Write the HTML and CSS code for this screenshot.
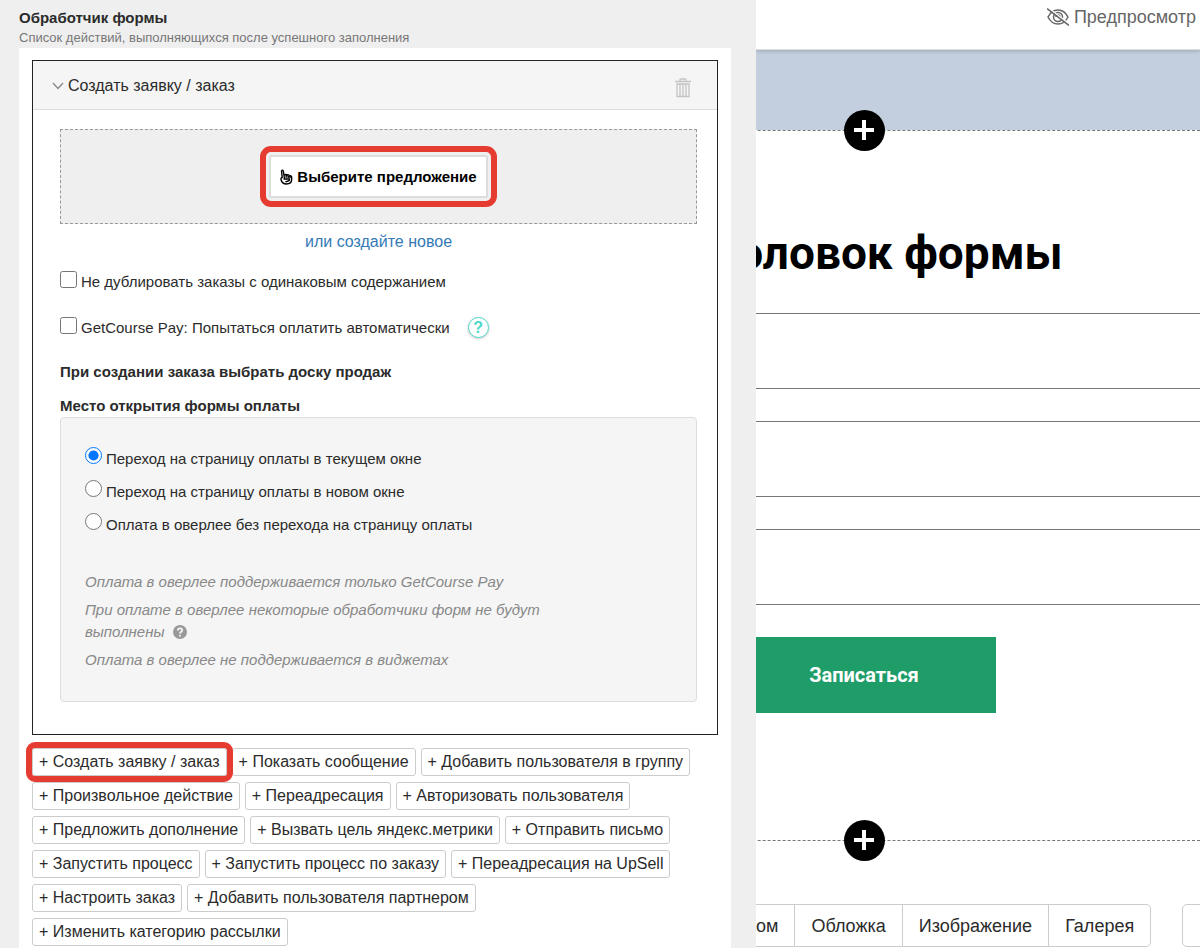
FILE: index.html
```html
<!DOCTYPE html>
<html lang="ru">
<head>
<meta charset="utf-8">
<title>Обработчик формы</title>
<link rel="stylesheet" href="styles.css">
</head>
<body>
<div class="editor">
  <section class="settings">
    <h1 class="settings-title">Обработчик формы</h1>
    <p class="settings-note">Список действий, выполняющихся после успешного заполнения</p>
    <div class="handlers">
      <article class="card">
        <header class="card-head">
          <svg class="chevron" viewBox="0 0 12 8"><path d="M1 1l5 5.500 5-5.500"/></svg>
          <span class="card-name">Создать заявку / заказ</span>
          <button class="icon-button" type="button" aria-label="Удалить">
            <svg class="trash" viewBox="0 0 16 20"><path d="M0 3.500h16M5 3V1.500Q5 1 6 1h4q1 0 1 .5V3M2 6h12v12.500H2zM5 6v12M8 6v12M11 6v12"/></svg>
          </button>
        </header>
        <div class="card-body">
          <div class="offer-drop">
            <button class="offer-button marked" type="button">
              <svg class="hand" viewBox="0 0 13 16"><path d="M4.500 9.500L3.300 2Q2.500.3 1.500 2L2.200 8.500Q.8 8.500 1 10.500 2 15 6.500 15q5 0 5.200-4.500L11.500 7.500Q10.500 6 9.500 7 8.500 5 7.200 6.300 5.800 4.800 4.200 6.300M6.200 6.500v2.300M8.200 7v2M10 7.500V9M3.500 10h6q.3 2-2 2.200-1.500.1-2 1"/></svg>
              <span>Выберите предложение</span>
            </button>
          </div>
          <a class="new-offer" href="#">или создайте новое</a>
          <label class="check"><input type="checkbox"><span>Не дублировать заказы с одинаковым содержанием</span></label>
          <div class="check-row">
            <label class="check"><input type="checkbox"><span>GetCourse Pay: Попытаться оплатить автоматически</span></label>
            <button class="help" type="button">?</button>
          </div>
          <h2 class="field-title">При создании заказа выбрать доску продаж</h2>
          <h2 class="field-title">Место открытия формы оплаты</h2>
          <div class="well">
            <div class="radios">
              <label class="radio"><input type="radio" name="place" checked><span>Переход на страницу оплаты в текущем окне</span></label>
              <label class="radio"><input type="radio" name="place"><span>Переход на страницу оплаты в новом окне</span></label>
              <label class="radio"><input type="radio" name="place"><span>Оплата в оверлее без перехода на страницу оплаты</span></label>
            </div>
            <div class="hints">
              <p>Оплата в оверлее поддерживается только GetCourse Pay</p>
              <p>При оплате в оверлее некоторые обработчики форм не будут выполнены <svg class="hint-help" viewBox="0 0 14 14"><circle cx="7" cy="7" r="7"/><path d="M4.800 5.500q0-2.200 2.200-2.200t2.200 1.900q0 1-1.100 1.700Q7 7.500 7 8.500M7 9.700v1.800"/></svg></p>
              <p>Оплата в оверлее не поддерживается в виджетах</p>
            </div>
          </div>
        </div>
      </article>
      <div class="actions">
        <button class="action marked" type="button">+ Создать заявку / заказ</button>
        <button class="action" type="button">+ Показать сообщение</button>
        <button class="action" type="button">+ Добавить пользователя в группу</button>
        <button class="action" type="button">+ Произвольное действие</button>
        <button class="action" type="button">+ Переадресация</button>
        <button class="action" type="button">+ Авторизовать пользователя</button>
        <button class="action" type="button">+ Предложить дополнение</button>
        <button class="action" type="button">+ Вызвать цель яндекс.метрики</button>
        <button class="action" type="button">+ Отправить письмо</button>
        <button class="action" type="button">+ Запустить процесс</button>
        <button class="action" type="button">+ Запустить процесс по заказу</button>
        <button class="action" type="button">+ Переадресация на UpSell</button>
        <button class="action" type="button">+ Настроить заказ</button>
        <button class="action" type="button">+ Добавить пользователя партнером</button>
        <button class="action" type="button">+ Изменить категорию рассылки</button>
      </div>
    </div>
  </section>

  <main class="preview">
    <header class="topbar">
      <button class="preview-button" type="button">
        <svg class="eye" viewBox="0 0 22 18"><path d="M1 9q3.500-7 10-7t10 7q-3.500 7-10 7T1 9z"/><circle cx="11" cy="9" r="4.500"/><path d="M9 9q0-2 2-2t2 2"/><path class="slash-gap" d="M1.500 0L22 16"/><path d="M0 .5l22 17"/></svg>
        <span>Предпросмотр</span>
      </button>
    </header>
    <div class="canvas">
      <div class="cover"></div>
      <div class="divider">
        <button class="add" type="button" aria-label="Добавить блок"><svg viewBox="0 0 22 22"><path d="M11 1v20M1 11h20"/></svg></button>
      </div>
      <form class="form-block">
        <h2 class="form-title">Заголовок формы</h2>
        <input class="form-field" type="text" aria-label="Имя">
        <input class="form-field" type="text" aria-label="Почта">
        <input class="form-field" type="text" aria-label="Телефон">
        <button class="submit" type="button">Записаться</button>
      </form>
      <div class="divider">
        <button class="add" type="button" aria-label="Добавить блок"><svg viewBox="0 0 22 22"><path d="M11 1v20M1 11h20"/></svg></button>
      </div>
    </div>
    <nav class="block-types">
      <div class="group">
        <button class="type type-cut" type="button">ом</button>
        <button class="type" type="button">Обложка</button>
        <button class="type" type="button">Изображение</button>
        <button class="type" type="button">Галерея</button>
      </div>
      <button class="type type-next" type="button" aria-label="Ещё"></button>
    </nav>
  </main>
</div>
</body>
</html>
```
FILE: styles.css
```css
* { box-sizing: border-box; }

body {
  margin: 0;
  background: #fff;
  color: #2b2b2b;
  font-family: "Liberation Sans", Arial, sans-serif;
  font-size: 16px;
  line-height: 22px;
}

h1, h2, p { margin: 0; }
button, input { font: inherit; color: inherit; margin: 0; }
button { cursor: pointer; white-space: nowrap; }
svg { display: block; fill: none; stroke: currentColor; }

.editor {
  display: grid;
  grid-template-columns: 63% minmax(0, 1fr);
  min-height: 100vh;
}

/* Settings column */
.settings {
  display: flex;
  flex-direction: column;
  padding: 8px 25px 0 19px;
  background: #efefef;
}
.settings-title { font-size: 15px; line-height: 20px; }
.settings-note { font-size: 13px; line-height: 20px; color: #777; }
.handlers { flex: 1; padding: 12px 13px 0; background: #fff; }

.card { border: 1px solid #222; }
.card-head {
  display: flex;
  align-items: center;
  gap: 4px;
  height: 49px;
  padding: 1px 26px 0 19px;
  background: #f5f5f5;
  border-bottom: 1px solid #ddd;
}
.chevron { width: 12px; height: 8px; stroke: #888; stroke-width: 1.3; }
.card-name { flex: 1; }
.icon-button { padding: 4px 0 0; border: 0; background: none; color: #c4c4c4; }
.trash { width: 16px; height: 20px; stroke-width: 1.3; }

.card-body { padding: 19px 20px 32px 27px; }
.offer-drop {
  display: flex;
  justify-content: center;
  align-items: center;
  height: 95px;
  border: 1px dashed #999;
  background: #efefef;
}
.offer-button {
  display: flex;
  align-items: center;
  gap: 4px;
  height: 43px;
  padding: 0 9px;
  border: 2px solid #ddd;
  background: #fff;
  color: #000;
  font-size: 15px;
  font-weight: bold;
}
.hand { width: 13px; height: 16px; stroke-width: 1.4; }

/* Red highlight round a control */
.marked {
  position: relative;
  z-index: 1;
  outline: 6px solid #e63b31;
}
.offer-button.marked { outline-offset: 3px; border-radius: 2px; }

.new-offer {
  display: block;
  padding-top: 7px;
  text-align: center;
  color: #337ab7;
  text-decoration: none;
}
.check { display: flex; gap: 4px; margin-top: 18px; font-size: 15px; }
.check input, .radio input { flex: none; width: 17px; height: 17px; }
.check-row { display: flex; gap: 18px; padding-top: 6px; }
.help {
  width: 21px;
  height: 21px;
  margin-top: 18px;
  padding: 0;
  border: 1px solid #4cd9c8;
  border-radius: 50%;
  background: #fff;
  box-shadow: 0 1px 3px #ccc;
  color: #4cd9c8;
  font-weight: bold;
  line-height: 18px;
}
.field-title { padding-top: 12px; font-size: 15px; line-height: 22px; }
.check-row + .field-title { padding-top: 22px; }

.well {
  padding: 29px 24px 30px;
  border: 1px solid #ddd;
  border-radius: 4px;
  background: #f5f5f5;
}
.radios { display: flex; flex-direction: column; gap: 10px; }
.radio { display: flex; gap: 4px; font-size: 15px; }
.radio span { padding-top: 1px; }
.hints {
  display: flex;
  flex-direction: column;
  gap: 6px;
  max-width: 470px;
  padding-top: 35px;
  color: #888;
  font-size: 15px;
  font-style: italic;
}
.hint-help {
  display: inline-block;
  width: 14px;
  height: 14px;
  margin-left: 4px;
  vertical-align: -2px;
  fill: #999;
  stroke: none;
}
.hint-help path { fill: none; stroke: #f5f5f5; stroke-width: 1.8; }

.actions { display: flex; flex-wrap: wrap; gap: 6px 5px; padding-top: 13px; }
.action {
  height: 28px;
  padding: 0 6px;
  border: 1px solid #ccc;
  border-radius: 3px;
  background: #fff;
}

/* Page preview */
.preview { display: flex; flex-direction: column; overflow: hidden; }
.topbar {
  position: relative;
  display: flex;
  justify-content: flex-end;
  align-items: flex-start;
  height: 50px;
  padding: 6px 4px 0;
  background: #fff;
  border-bottom: 1px solid #ddd;
  box-shadow: 0 1px 4px rgba(0, 0, 0, 0.2);
}
.preview-button {
  display: flex;
  align-items: center;
  gap: 5px;
  padding: 0;
  border: 0;
  background: none;
  color: #666;
  font-size: 18px;
}
.eye { width: 22px; height: 18px; stroke-width: 1.5; }
.slash-gap { stroke: #fff; }

/* The canvas runs on underneath the settings column */
.canvas { margin-left: -228px; }
.cover { height: 80px; background: #c3cfdf; }
.divider {
  display: flex;
  justify-content: center;
  align-items: center;
  height: 0;
  border-bottom: 1px dashed #777;
}
.add {
  display: flex;
  justify-content: center;
  align-items: center;
  flex: none;
  width: 41px;
  height: 41px;
  padding: 0;
  border: 0;
  border-radius: 50%;
  background: #000;
  color: #fff;
}
.add svg { width: 22px; height: 22px; stroke-width: 4; }
.form-block {
  display: flex;
  flex-direction: column;
  align-items: center;
  gap: 32px;
  padding: 94px 0 127px;
}
.form-title {
  color: #000;
  font-family: Roboto, sans-serif;
  font-size: 46px;
  line-height: 56px;
  white-space: nowrap;
}
.form-field { width: 100%; height: 76px; padding: 0 20px; border: 1px solid #777; border-width: 1px 0; }
.submit {
  width: 264px;
  height: 76px;
  border: 0;
  background: #1f9d69;
  color: #fff;
  font-family: Roboto, sans-serif;
  font-size: 20px;
  font-weight: bold;
}

.block-types { display: flex; gap: 31px; padding-top: 63px; }
.group { display: flex; }
.type {
  height: 43px;
  padding: 0 16px;
  border: 1px solid #ccc;
  border-left: 0;
  background: #fff;
  font-size: 18px;
}
.type-cut { padding-left: 0; }
.group .type:last-child { border-radius: 0 5px 5px 0; }
.type-next { flex: none; width: 80px; border-left: 1px solid #ccc; border-radius: 5px; }
```
